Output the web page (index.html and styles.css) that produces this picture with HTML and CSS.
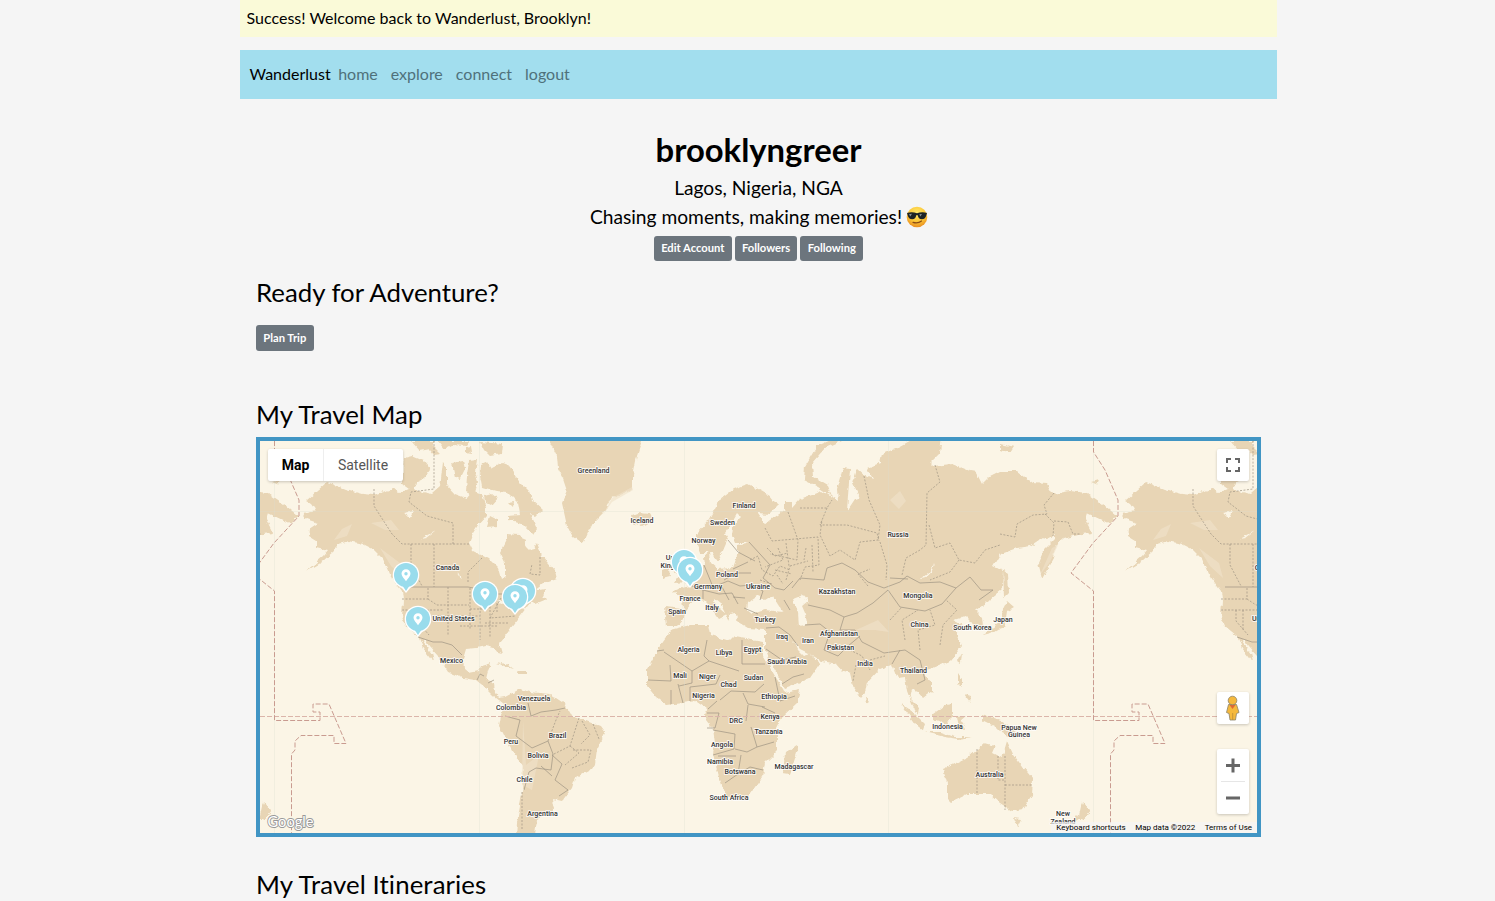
FILE: index.html
```html
<!DOCTYPE html>
<html lang="en">
<head>
<meta charset="utf-8">
<title>Wanderlust</title>
<link rel="stylesheet" href="styles.css">
</head>
<body>
<div class="container">
  <div class="flash">Success! Welcome back to Wanderlust, Brooklyn!</div>
  <nav class="nav"><a class="brand">Wanderlust</a><a>home</a><a>explore</a><a>connect</a><a>logout</a></nav>
  <main class="content">
    <header class="profile">
      <h1>brooklyngreer</h1>
      <p>Lagos, Nigeria, NGA</p>
      <p class="bio">Chasing moments, making memories!
        <svg class="emoji" viewBox="0 0 22 22"><defs><radialGradient id="face" cx=".5" cy=".3" r=".7"><stop offset="0" stop-color="#ffe96b"/><stop offset=".6" stop-color="#fbc535"/><stop offset="1" stop-color="#e98d20"/></radialGradient></defs><circle cx="11" cy="11" r="10.3" fill="url(#face)"/><path d="M1 7Q6 5.5 11 7.3Q16 5.5 21 7L20.4 9Q19.5 13.2 15.8 13.2Q12.3 13 11.8 9.2H10.2Q9.700 13 6.200 13.200Q2.500 13.200 1.600 9Z" fill="#1d2325"/><path d="M3 8.200L6 7.800L4.300 10.500ZM13.300 8.300L16 7.900L14.300 10.500Z" fill="#8b9396"/><path d="M7 16.300Q12 17.700 15.500 15" fill="none" stroke="#8b4b14" stroke-width="1.200" stroke-linecap="round"/></svg></p>
      <div class="buttons"><button class="btn">Edit Account</button><button class="btn">Followers</button><button class="btn">Following</button></div>
    </header>
    <h2 class="ready">Ready for Adventure?</h2>
    <button class="btn plan">Plan Trip</button>
    <h2 class="maptitle">My Travel Map</h2>
    <section class="map">
      <svg class="world" viewBox="260 441 997 392">
        <defs>
          <filter id="coast" x="-5%" y="-5%" width="110%" height="110%"><feTurbulence type="fractalNoise" baseFrequency=".16" numOctaves="3" seed="4"/><feDisplacementMap in="SourceGraphic" scale="5" xChannelSelector="R" yChannelSelector="G"/></filter>
          <g id="land">
            <g class="land" filter="url(#coast)">
              <path d="M327 482L345 489 363 494 373 495 384 492 393 488 399 493 409 489 402 484 404 458 412 456 424 461 431 470 424 479 416 483 414 490 432 494 440 487 443 462 447 468 447 485 455 494 466 498 472 491 482 495 486 508 486 516 478 525 473 533 469 543 473 551 489 559 498 568 501 579 505 576 505 563 500 553 507 539 507 533 520 534 527 546 532 551 537 543 542 556 555 571 557 579 543 584 534 591 546 589 543 596 547 599 535 604 530 603 520 616 510 629 505 636 499 643 502 654 498 653 494 648 486 646 476 648 466 649 463 659 464 669 469 673 479 671 481 666 491 663 488 671 486 679 494 683 495 693 499 698 505 697 520 689 530 692 550 694 565 704 572 716 600 726 605 733 597 749 595 764 592 769 575 778 572 788 562 801 553 799 555 809 537 819 535 836 516 836 517 823 522 793 523 766 513 753 503 733 499 726 501 716 504 704 494 696 486 688 476 680 463 678 448 672 443 664 438 656 429 646 424 638 423 641 432 654 434 662 423 648 418 636 406 626 402 616 403 599 402 591 396 583 389 573 383 559 373 549 363 544 349 541 339 544 334 551 323 561 306 571 324 556 328 551 316 548 316 541 308 536 309 529 318 523 306 519 303 514 316 511 311 504 306 501Z"/>
              <path d="M411 441L435 441 430 449 420 451ZM438 441L470 441 466 446 452 445 444 449ZM480 442L503 444 502 454 490 456 484 450ZM466 448L471 447 472 453 466 452ZM452 463L463 461 465 469 460 479 455 477ZM469 461L477 460 475 471 478 482 474 496 466 492 467 476ZM481 465L488 462 492 468 502 463 510 466 518 480 529 491 532 500 543 510 536 517 530 514 537 529 533 535 522 524 508 520 508 515 520 514 518 503 507 492 496 491 482 487 480 476ZM484 496L492 494 497 498 491 505 485 502ZM490 516L498 520 498 526 487 527ZM508 502L514 501 513 507ZM426 445L430 443 441 454 434 455Z"/>
              <path d="M548 437L557 456 558 469 563 479 567 491 562 503 567 526 573 537 583 544 588 533 593 523 603 513 610 499 633 489 633 476 637 456 643 437Z"/>
              <path d="M631 515L637 513 650 514 653 520 642 526 633 523ZM672 561L680 552 686 556 685 566 695 576 690 582 674 583 679 575 672 570ZM662 571L669 568 670 577 662 579Z"/>
              <path d="M665 606L683 608 682 599 673 591 682 588 690 586 693 578 700 569 705 566 704 556 709 552 710 563 717 569 733 568 737 556 737 546 750 543 735 543 732 536 733 526 741 518 737 514 730 526 725 533 728 539 722 553 717 561 712 553 700 553 697 546 697 533 710 519 720 499 733 489 748 484 770 496 778 506 770 514 757 513 765 524 775 516 785 509 785 501 792 501 792 508 800 499 822 491 838 501 837 489 843 468 850 469 848 496 847 511 855 499 860 498 853 483 857 469 865 476 873 479 867 468 880 463 882 454 897 448 917 437 942 437 940 453 930 463 933 466 953 464 970 471 976 472 982 484 990 476 1000 471 1017 471 1033 483 1047 484 1053 494 1070 491 1087 493 1103 504 1117 516 1110 524 1087 513 1085 519 1092 533 1082 534 1063 539 1055 546 1053 559 1042 579 1038 563 1043 551 1055 539 1055 534 1047 539 1042 538 1030 546 1017 548 1000 554 993 566 1003 571 1002 590 990 600 975 611 982 618 983 627 976 629 970 620 966 616 954 620 963 625 956 631 962 646 950 661 933 668 922 671 932 683 932 691 923 698 917 691 912 689 910 698 919 707 918 714 912 704 907 691 905 678 898 679 892 664 880 669 867 683 865 693 861 698 853 686 850 673 843 671 837 664 822 661 808 653 800 649 793 641 797 650 803 656 810 654 820 663 810 678 785 688 782 683 770 661 765 649 765 629 748 628 738 622 735 612 730 613 729 621 725 613 720 603 715 599 713 603 727 615 719 619 708 604 703 599 693 601 687 609 683 619 677 626 667 626Z"/>
              <path d="M663 641L671 630 690 625 708 625 710 635 730 641 735 636 763 641 763 656 775 676 783 689 785 693 800 690 797 703 783 716 777 728 777 751 765 763 763 776 750 794 742 798 727 798 722 786 715 763 713 753 715 743 713 729 707 721 705 714 707 708 697 701 667 705 655 696 647 686 647 669 657 651Z"/>
              <path d="M836 438L817 446 805 466 804 480 818 487 832 496 828 486 813 477 812 463 825 448 841 441ZM785 753L797 744 798 749 790 774 783 773ZM865 697L869 702 866 704ZM1003 569L1008 573 1009 593 1004 598ZM1003 609L1007 601 1014 607 1007 611 1005 625 991 634 983 636 990 629 1001 622ZM958 673L962 679 962 687 958 683ZM964 694L971 696 970 702ZM962 653L961 663 958 661ZM1001 444L1014 447 1010 453 1001 450ZM1091 482L1098 480 1096 484Z"/>
              <path d="M901 704L913 712 925 724 923 730 915 724ZM925 732L940 732 955 737 973 737 958 739 945 737ZM933 714L947 704 952 703 952 716 947 724 933 719ZM956 717L966 716 960 721 965 729 958 729ZM982 714L1000 720 1012 729 1025 739 1014 738 1002 733 996 727 982 720Z"/>
              <path d="M943 769L967 758 977 749 984 743 995 746 992 753 1002 758 1007 741 1013 754 1022 766 1033 779 1032 796 1023 809 1012 811 1000 803 990 794 967 794 950 802 947 799 947 783ZM1013 818L1021 819 1017 827ZM1082 802L1090 811 1083 820 1078 820ZM1077 816L1080 819 1067 828ZM497 662L508 665 514 669 503 666ZM517 671L528 671 528 674 519 674Z"/>
            </g>
            <g class="sea" filter="url(#coast)">
              <path d="M748 602L757 596 765 600 773 595 778 604 783 612 765 610 752 614 747 610ZM793 599L803 595 808 601 802 606 805 613 807 624 799 626 798 613ZM404 513L414 511 411 517ZM421 539L436 531 427 538ZM920 578Q930 575 934 563 932 578 920 578ZM489 591L498 594 492 597ZM497 599L508 603 502 604ZM457 571L462 579 459 577Z"/>
            </g>
            <g class="relief"><path d="M334 540L342 529 352 524 347 536ZM371 523L391 520 399 530 385 530ZM380 548L400 563 404 578 391 566ZM856 630L878 620 889 632 875 630ZM890 500L900 491 906 501 899 509ZM523 720L526 765 539 755 532 790 522 785ZM1040 575L1052 548 1058 545 1050 562ZM603 515L612 498 632 487 633 490 612 502Z"/></g>
            <g class="border">
              <path class="solid" d="M406 587H468L479 589 490 594 505 594 511 585 525 583"/>
              <path d="M374 489V506L383 520 392 534 402 544H469M411 544V565L422 586M434 544V587M453 544V523L427 516 409 502 411 492 434 489V441M468 582V572L482 558M402 599H428V587M402 610H444M424 610V630M417 610V621L429 635M428 599L437 605H469M448 587V635M470 588V629M437 616H480M480 597V640M490 603V638M501 598L490 618 516 616M485 623H508M540 557V575L530 574 532 564M460 626H497M470 609H486M497 603V612"/>
              <path class="solid" d="M418 637L433 642 442 642 452 645 462 655M477 680L480 674 484 676M488 683L494 680"/>
              <path class="solid" d="M505 716L520 720 516 736 532 748 548 741 553 754 551 770 536 768 529 772 524 790M528 703L531 716 541 712 556 710 565 708M552 755L562 764 555 780 568 790 559 796M541 766L552 776"/>
              <path d="M548 741L556 720 560 711M579 718L570 746 552 755M570 746L579 753 565 765M582 721L590 735 581 744M593 724L599 739M573 750L591 750 588 762 572 768M522 792V830"/>
              <path class="solid" d="M664 652L692 671 709 661 739 671M657 651L664 650M707 640L704 656 709 661M742 640V664H765M648 680L671 681 670 665M692 671V683L679 686M671 690L671 704M678 684L683 703M690 701V687L716 684 720 675M720 700L731 691 755 692 764 684M717 701L708 709M743 693L748 704 765 707M748 705L746 721M707 713H719L715 728H707M713 730L735 734 734 749 713 755M735 749L747 752 757 747 751 727M741 755L738 774 725 783M738 774L750 767 763 770M757 747L774 742M775 677L780 701 795 696M736 756L718 756M762 707L775 713"/>
              <path class="solid" d="M749 542L760 554 770 565 763 578 775 588 784 590 793 581M728 540L738 552 755 561M704 565L713 587 728 581 740 586 752 585M692 586L703 590 703 599M703 590L719 594 732 593 738 604M724 580L736 573 751 573M733 569L748 562M752 585L763 591 760 600M744 608L758 614M784 600L790 610M766 628L779 627 790 635 798 646M805 625L820 624 830 632 824 650 838 656 848 646 860 636M782 684L793 677 804 674M766 649L782 660 796 657M722 587L729 600M733 597L745 598"/>
              <path class="solid" d="M792 588L800 578 824 580 827 568 842 563 855 570 868 582 884 588 900 582 907 576 920 583 940 582 956 588 942 604 925 611 900 607 888 590 873 603 857 613 844 617 830 610 808 605M908 579L890 578M956 588L970 577 981 590 993 590 979 600M844 617L840 630 855 630 862 642 884 653 905 650 920 660 925 680 917 684M892 664L900 650"/>
              <path d="M800 508L827 508 832 500M827 508L820 525 847 525 877 533 879 541M864 476L869 500 880 525 878 540 860 542 855 560 840 550 830 556 820 535 822 520M788 512L798 540 797 560 770 554M765 528L772 541 818 537 819 565 805 567 800 580M778 548L783 560 765 567M775 570L792 574M935 465L940 482 927 493 926 545 920 550 906 558 902 575M929 525L935 548 950 543 959 560 975 563 985 550 1000 545M959 560L950 572 930 580M880 542L887 565 886 580M850 650L862 656 870 670M870 660L885 656M856 665L853 681M890 620L902 607M905 640L902 620 918 610M920 650L918 630 935 625 930 610M940 645L943 625 957 610 946 600M1054 493L1044 505 1047 514 1033 515 1017 524 1015 537 1000 534M1045 514L1054 523 1053 536M1054 521L1068 522 1073 534 1080 534"/>
              <path d="M977 749V794M1005 756V810M1005 785H1033M998 756V780H1005M750 560L758 556 762 570 773 576 780 566 790 570M760 580L772 584M786 580L790 566M790 566L808 561M868 586L858 574 870 569M767 548L775 556 788 553M777 575L783 584M806 548L804 560M812 545L813 572M786 543L789 566"/>
            </g>
          </g>
          <g id="dateline"><path class="date" d="M1093.500 441V452L1105 470 1118 500V516L1093 543 1071 573 1093.500 591V720.500H1139V712H1132V704H1148L1165 743.500H1153V735.500H1120L1114 741V750L1110.500 754V833"/></g>
          <g id="pin"><path d="M-5 12L0 18 5 12Z" fill="#fff"/><circle r="13.300" fill="#fff"/><path d="M-4 10L0 16 4 10Z"/><circle r="12"/><path d="M0 6.200C-1.700 3.400-4.500 1.300-4.500-1.300A4.500 4.500 0 0 1 4.500-1.300C4.500 1.300 1.700 3.400 0 6.200Z" fill="#fff"/><circle cy="-1.300" r="1.700"/></g>
        </defs>
        <use href="#land"/><use href="#land" x="-819"/><use href="#land" x="819"/>
        <path class="grid" d="M260 511.500H1257M274.500 441V833M479.500 441V833M684.500 441V833M888.500 441V833M1093.500 441V833"/>
        <path class="date equator" d="M260 716.500H1257"/>
        <use href="#dateline"/><use href="#dateline" x="-819"/>
        <g class="labels">
          <text x="593.500" y="473">Greenland</text><text x="642" y="523">Iceland</text><text x="744" y="508">Finland</text><text x="722.500" y="525">Sweden</text><text x="703.500" y="543">Norway</text><text x="898" y="536.500">Russia</text><text x="447.500" y="570">Canada</text><text x="453.500" y="620.500">United States</text><text x="451.500" y="663">Mexico</text><text x="676" y="560">United</text><text x="674.500" y="567.500">Kingdom</text><text x="727" y="576.500">Poland</text><text x="708" y="588.500">Germany</text><text x="758" y="588.500">Ukraine</text><text x="690" y="600.500">France</text><text x="712" y="609.500">Italy</text><text x="677" y="614">Spain</text><text x="765" y="622">Turkey</text><text x="837" y="593.500">Kazakhstan</text><text x="918" y="598">Mongolia</text><text x="919.500" y="627">China</text><text x="972.500" y="630">South Korea</text><text x="1003" y="622">Japan</text><text x="839" y="635.500">Afghanistan</text><text x="782" y="639">Iraq</text><text x="808" y="643">Iran</text><text x="840.500" y="650">Pakistan</text><text x="865" y="665.500">India</text><text x="913.500" y="672.500">Thailand</text><text x="688.500" y="652">Algeria</text><text x="724" y="655">Libya</text><text x="752.500" y="652">Egypt</text><text x="787" y="664">Saudi Arabia</text><text x="680" y="677.500">Mali</text><text x="707.500" y="678.500">Niger</text><text x="753.500" y="680">Sudan</text><text x="728.500" y="687">Chad</text><text x="703.500" y="697.500">Nigeria</text><text x="774" y="699">Ethiopia</text><text x="770" y="718.500">Kenya</text><text x="736" y="723">DRC</text><text x="768.500" y="733.500">Tanzania</text><text x="722" y="747">Angola</text><text x="720" y="764">Namibia</text><text x="740" y="773.500">Botswana</text><text x="794" y="768.500">Madagascar</text><text x="729" y="800">South Africa</text><text x="534" y="700.500">Venezuela</text><text x="511" y="710">Colombia</text><text x="557.500" y="738">Brazil</text><text x="511" y="744">Peru</text><text x="538" y="757.500">Bolivia</text><text x="524.500" y="782">Chile</text><text x="542.500" y="816">Argentina</text><text x="947.500" y="728.500">Indonesia</text><text x="1019" y="729.500">Papua New</text><text x="1019" y="737">Guinea</text><text x="989.500" y="777">Australia</text><text x="1063" y="816">New</text><text x="1063" y="823.500">Zealand</text><text x="1266.500" y="570">Canada</text><text x="1273" y="620.500">United States</text>
        </g>
        <g class="pins"><use href="#pin" x="406" y="575"/><use href="#pin" x="418" y="619"/><use href="#pin" x="485" y="594"/><use href="#pin" x="523" y="591"/><use href="#pin" x="515" y="597"/><use href="#pin" x="684" y="562"/><use href="#pin" x="690" y="570"/></g>
        <text class="google" x="267.500" y="827" textLength="46" lengthAdjust="spacingAndGlyphs">Google</text>
      </svg>
      <div class="types"><b>Map</b><span>Satellite</span></div>
      <div class="control full"><svg viewBox="0 0 32 32"><path d="M10 14V10H14M18 10H22V14M22 18V22H18M14 22H10V18"/></svg></div>
      <div class="control person"><svg viewBox="0 0 32 32"><path d="M11.500 12.500H19.500L22 20.500 19.500 21.500 18.500 28H13L12 21.500 9.500 20.500Z" fill="#f5b93d" stroke="#8c8369" stroke-width=".8"/><path d="M12.500 13H18.500L15.500 17Z" fill="#df6837"/><circle cx="15.500" cy="8.500" r="4.300" fill="#f5b93d" stroke="#8c8369" stroke-width=".8"/><path d="M15.700 21V28" stroke="#b98c38" stroke-width=".8"/></svg></div>
      <div class="control zoom"><svg viewBox="0 0 32 65"><path class="thick" d="M9 16.500H23M16 9.500V23.500M9 49H23"/><path class="divider" d="M4 32.500H28"/></svg></div>
      <div class="legal"><span>Keyboard shortcuts</span><span>Map data ©2022</span><span>Terms of Use</span></div>
    </section>
    <h2 class="itineraries">My Travel Itineraries</h2>
  </main>
</div>
</body>
</html>
```
FILE: styles.css
```css
*{box-sizing:border-box}
html,body{height:100%}
body{margin:0;background:#f5f5f5;color:#000;font-family:Lato,sans-serif;font-size:16px;font-variant-ligatures:none;overflow:hidden}
.container{width:1037px;margin-left:240px}
.flash{height:37px;padding:0 6.500px;line-height:35px;background:#fafad8}
.nav{height:49px;margin-top:13px;padding:0 0 2px 9.500px;display:flex;align-items:center;background:#a2deee}
.nav a{margin-right:13px;color:#4f717b}
.nav .brand{margin-right:7.500px;color:#000}
.content{padding:0 16px}
.profile{padding-top:29px;text-align:center}
h1,h2,p{margin:0}
h1{font-size:32.800px;line-height:44px;font-weight:700}
p{font-size:19.200px;line-height:29px}
.profile p:first-of-type{margin-top:1px}
.bio{display:flex;justify-content:center;align-items:center;gap:4px}
.emoji{width:22px;height:22px;margin-right:-1px}
.buttons{display:flex;justify-content:center;gap:3px;margin-top:5px}
.btn{height:25px;padding:0 7.300px 2px;border:0;border-radius:3px;background:#6c757d;color:#fff;font:700 11.200px Lato,sans-serif}
h2{font-size:25.800px;line-height:32px;font-weight:400}
.ready{margin-top:15px}
.plan{display:block;height:26px;margin-top:17px}
.maptitle{margin-top:47px}
.map{position:relative;height:400px;margin-top:7px;border:4px solid #4195c4;background:#fbf5e6;overflow:hidden;font-family:Roboto,sans-serif}
.world{display:block;width:997px;height:392px}
.land{fill:#e8d5b5}
.sea{fill:#fbf5e6}
.relief{fill:#efe2ca;opacity:.65}
.border{fill:none;stroke:#9d9482;stroke-width:.7;stroke-dasharray:2 1.500}
.border .solid{stroke-dasharray:none}
.grid{fill:none;stroke:#dcded0;stroke-opacity:.3}
.date{fill:none;stroke:#c99b90;stroke-width:1;stroke-dasharray:5 2}
.equator{stroke:#dbb5aa}
.labels{font:500 7px Roboto,sans-serif;text-anchor:middle;fill:#333;stroke:#fff;stroke-width:2px;stroke-opacity:.75;stroke-linejoin:round;paint-order:stroke}
.pins{fill:#99dcec}
.google{font:400 16px Lato,sans-serif;fill:#fff;stroke:#999;stroke-width:2px;paint-order:stroke}
.types,.control,.legal{position:absolute}
.types,.control{background:#fff;border-radius:2px;box-shadow:0 1px 3px rgba(0,0,0,.2)}
.types{left:8px;top:8px;display:flex;width:135px;height:32px;line-height:32px;font-size:14px}
.types b{width:56px;text-align:center;font-weight:700;border-right:1px solid #eee}
.types span{flex:1;padding-right:1px;text-align:center;color:#565656}
.control{right:8px;width:32px;height:32px}
.control svg{display:block;width:100%;height:100%}
.full{top:8px}
.full path{fill:none;stroke:#666;stroke-width:2}
.person{top:251px}
.zoom{top:308px;height:65px}
.thick{stroke:#666;stroke-width:3}
.divider{stroke:#e6e6e6}
.legal{right:0;bottom:0;display:flex;gap:9.500px;padding:0 5px;height:11px;line-height:11px;background:rgba(245,245,245,.7);font-size:8px;white-space:nowrap}
.itineraries{margin-top:31px;letter-spacing:.1px}
```
